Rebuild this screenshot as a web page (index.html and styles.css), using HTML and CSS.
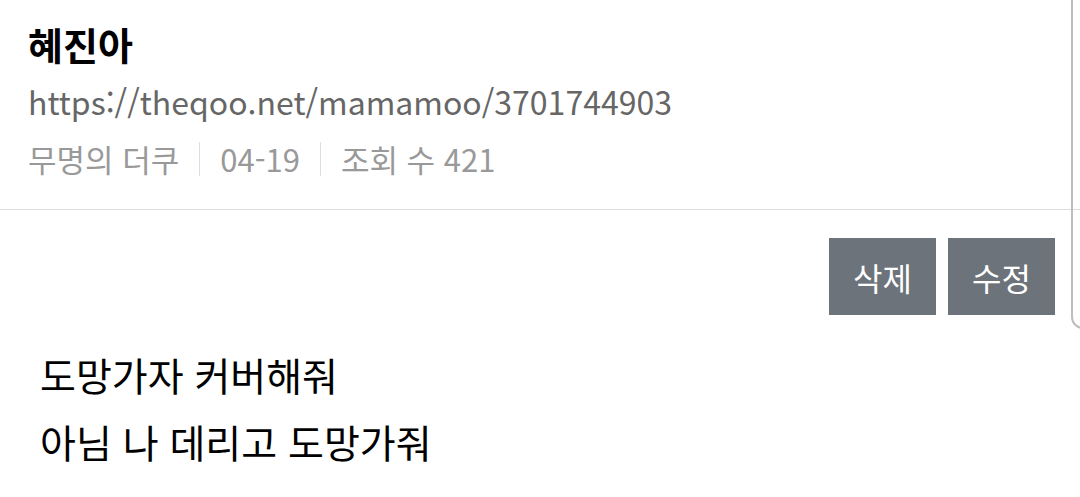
FILE: index.html
```html
<!DOCTYPE html>
<html lang="ko">
<head>
  <meta charset="UTF-8">
  <title>혜진아</title>
  <meta name="viewport" content="width=device-width, initial-scale=1">
  <link rel="stylesheet" href="styles.css">
</head>
<body>
  <div class="post">
    <div class="post-header">
      <h1 class="post-title">혜진아</h1>
      <div class="post-url">https://theqoo.net/mamamoo/3701744903</div>
      <div class="post-meta">
        <span>무명의 더쿠</span>
        <span class="sep"></span>
        <span>04-19</span>
        <span class="sep"></span>
        <span>조회 수 421</span>
      </div>
    </div>

    <div class="post-actions">
      <button class="btn">삭제</button>
      <button class="btn">수정</button>
    </div>

    <div class="post-body">
      <p>도망가자 커버해줘</p>
      <p>아님 나 데리고 도망가줘</p>
    </div>
  </div>

  <div class="side-panel"></div>
</body>
</html>
```

FILE: styles.css
```css
body {
  font-family: "Noto Sans CJK KR", "Noto Sans", sans-serif;
  margin: 0;
  background-color: white;
  color: #000;
  overflow: hidden;
}

.post-header {
  padding: 18px 28px 0 28px;
  height: 210px;
  border-bottom: 1px solid #dcdcdc;
  box-sizing: border-box;
}

.post-title {
  margin: 0;
  font-size: 38px;
  font-weight: bold;
  line-height: 52px;
}

.post-url {
  margin-top: 8px;
  font-size: 32px;
  line-height: 46px;
  color: #666;
}

.post-meta {
  display: flex;
  align-items: center;
  margin-top: 12px;
  font-size: 31px;
  line-height: 46px;
  color: #999;
}

.post-meta .sep {
  display: inline-block;
  width: 1px;
  height: 34px;
  background: #ddd;
  margin: 0 20px;
}

.post-actions {
  display: flex;
  justify-content: flex-end;
  gap: 12px;
  padding: 28px 25px 0 0;
}

.btn {
  width: 107px;
  height: 77px;
  border: none;
  background: #6c737a;
  color: white;
  font-family: inherit;
  font-size: 32px;
  padding: 0;
}

.post-body {
  padding: 26px 40px 0 40px;
}

.post-body p {
  margin: 0;
  font-size: 39px;
  line-height: 67px;
}

.side-panel {
  position: absolute;
  top: -20px;
  left: 1071px;
  width: 40px;
  height: 349px;
  border: 2px solid #bdbdbd;
  border-radius: 12px;
  box-sizing: border-box;
}
```
